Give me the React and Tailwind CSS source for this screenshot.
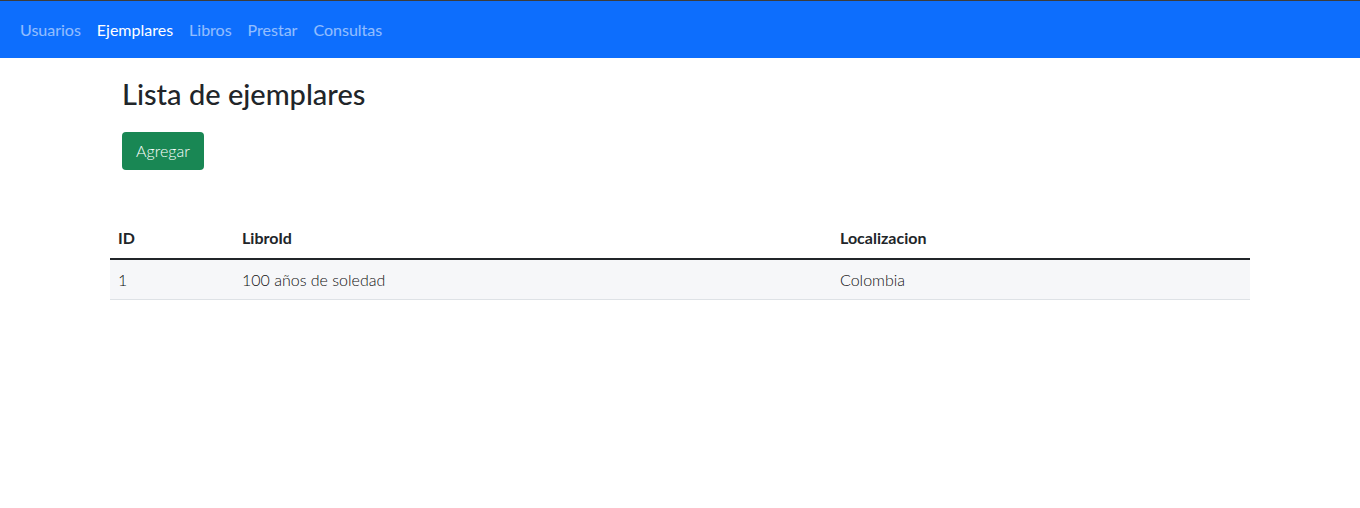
export default function App() {
  return (
    <div className="min-h-[508px] bg-white text-[#212529] font-['Lato','Noto_Sans',sans-serif]">
      {/* Navbar */}
      <nav className="h-[58px] bg-[#0d6efd] border-t border-[#3c3c3c] flex items-center px-5">
        <ul className="flex gap-4 text-base">
          <li className="text-white/55">Usuarios</li>
          <li className="text-white">Ejemplares</li>
          <li className="text-white/55">Libros</li>
          <li className="text-white/55">Prestar</li>
          <li className="text-white/55">Consultas</li>
        </ul>
      </nav>

      <div className="w-[1140px] mx-auto">
        <div className="px-3">
          <h3 className="mt-[19px] text-[29px] leading-[1.2] font-medium">Lista de ejemplares</h3>
          <button className="mt-[20px] h-[38px] w-[82px] rounded-[4px] bg-[#198754] text-white text-base font-light">
            Agregar
          </button>
        </div>

        {/* Table */}
        <table className="mt-[51px] w-full text-base border-collapse">
          <thead>
            <tr className="border-b-2 border-[#212529]">
              <th className="w-[124px] text-left font-bold px-2 pt-0 pb-[2px] h-[38px]">ID</th>
              <th className="w-[598px] text-left font-bold px-2 pt-0 pb-[2px]">LibroId</th>
              <th className="text-left font-bold px-2 pt-0 pb-[2px]">Localizacion</th>
            </tr>
          </thead>
          <tbody className="font-light text-[#111]">
            <tr className="bg-[#f6f7f9] border-b border-[#dee2e6]">
              <td className="px-2 h-[41px]">1</td>
              <td className="px-2">100 años de soledad</td>
              <td className="px-2">Colombia</td>
            </tr>
          </tbody>
        </table>
      </div>
    </div>
  );
}
